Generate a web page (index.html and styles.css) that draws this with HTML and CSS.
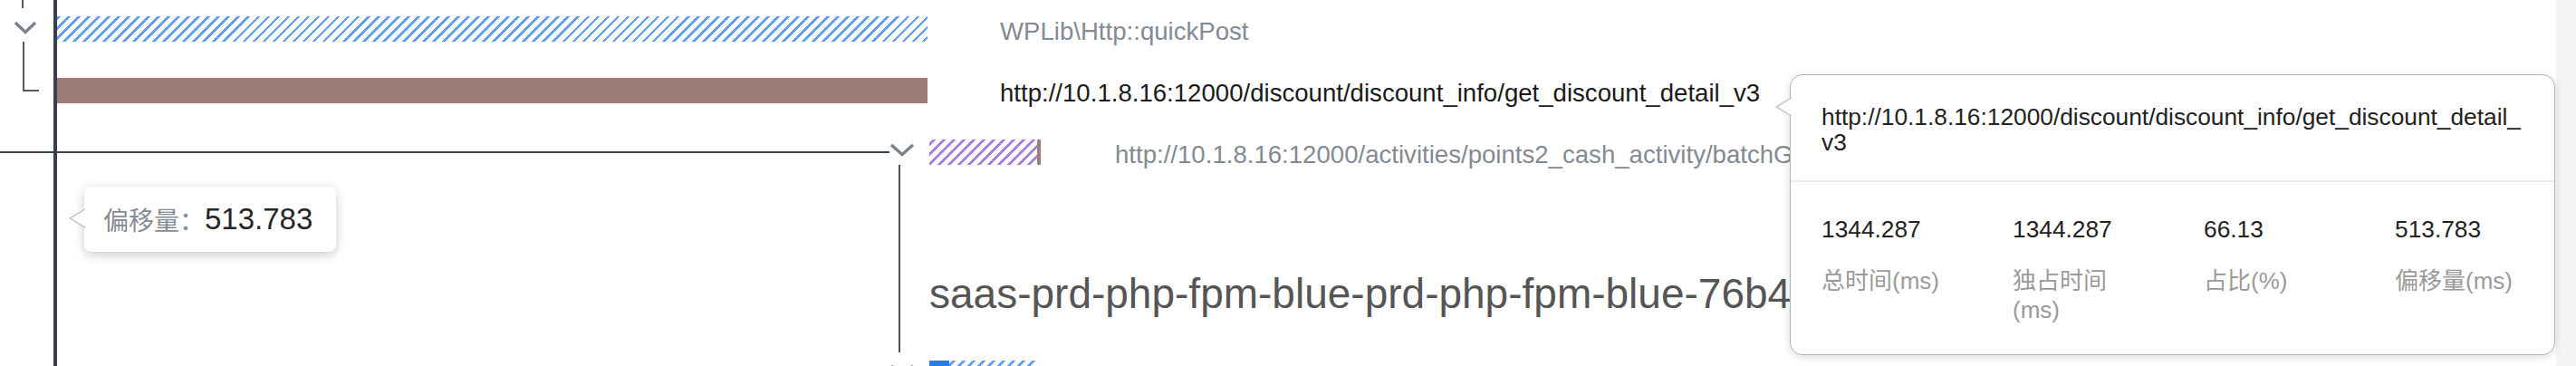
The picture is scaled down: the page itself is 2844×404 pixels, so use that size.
FILE: index.html
```html
<!DOCTYPE html>
<html lang="zh-CN">
<head>
<meta charset="utf-8">
<title>Trace</title>
<link rel="stylesheet" href="styles.css">
</head>
<body>
<div class="screen">
  <main class="chart">
    <div class="row row-a">
      <div class="gutter">
        <span class="stub"></span>
        <svg class="chev chev-root" viewBox="0 0 26 15" width="26" height="15"><polyline points="2,2 13,12.5 24,2" /></svg>
        <span class="drop"></span>
      </div>
      <div class="bar hatch-blue" style="width:964px"></div>
      <span class="label muted">WPLib\Http::quickPost</span>
    </div>
    <div class="row row-b">
      <div class="gutter"><span class="elbow"></span></div>
      <div class="bar solid-brown" style="width:964px"></div>
      <span class="label strong">http://10.1.8.16:12000/discount/discount_info/get_discount_detail_v3</span>
    </div>
    <div class="row row-c">
      <span class="connector"></span>
      <svg class="chev chev-node" viewBox="0 0 28 15" width="28" height="15"><polyline points="2,2 14,12.5 26,2" /></svg>
      <div class="bar hatch-purple" style="width:123px"></div>
      <span class="label muted far">http://10.1.8.16:12000/activities/points2_cash_activity/batchGet</span>
    </div>
    <div class="row row-host">
      <span class="guide"></span>
      <span class="host">saas-prd-php-fpm-blue-prd-php-fpm-blue-76b4k</span>
    </div>
    <div class="row row-e">
      <svg class="chev chev-node" viewBox="0 0 28 15" width="28" height="15"><polyline points="2,2 14,12.5 26,2" /></svg>
      <div class="bar hatch-blue" style="width:117px"><span class="bar-solid" style="width:22px"></span></div>
    </div>
  </main>
  <aside class="strip"></aside>
</div>

<div class="marker"></div>

<div class="tip tip-offset">
  <svg class="tip-arrow" viewBox="0 0 18 22" width="18" height="22"><polygon points="18,1 1,11 18,21" /><polyline points="18,1 1,11 18,21" /></svg>
  <span class="offset-key">偏移量：</span><span class="offset-val">513.783</span>
</div>

<div class="tip tip-detail">
  <svg class="tip-arrow" viewBox="0 0 18 22" width="18" height="22"><polygon points="18,1 1,11 18,21" /><polyline points="18,1 1,11 18,21" /></svg>
  <div class="tip-head">http://10.1.8.16:12000/discount/discount_info/get_discount_detail_v3</div>
  <div class="tip-stats">
    <div class="stat"><div class="stat-val">1344.287</div><div class="stat-key">总时间(ms)</div></div>
    <div class="stat"><div class="stat-val">1344.287</div><div class="stat-key">独占时间(ms)</div></div>
    <div class="stat"><div class="stat-val">66.13</div><div class="stat-key">占比(%)</div></div>
    <div class="stat"><div class="stat-val">513.783</div><div class="stat-key">偏移量(ms)</div></div>
  </div>
</div>
</body>
</html>
```
FILE: styles.css
```css
html, body {
  margin: 0;
  padding: 0;
}
body {
  width: 2844px;
  height: 404px;
  overflow: hidden;
  position: relative;
  background: #ffffff;
  font-family: "Liberation Sans", "Noto Sans CJK SC", sans-serif;
  color: #222;
}
.screen {
  display: flex;
  height: 404px;
}
.chart {
  flex: 1;
  min-width: 0;
  overflow: hidden;
  display: flex;
  flex-direction: column;
}
.strip {
  width: 22px;
  background: #f4f4f5;
}
.row {
  display: flex;
  align-items: flex-start;
  height: 68px;
  flex: none;
  white-space: nowrap;
}
.gutter {
  width: 60px;
  height: 100%;
  flex: none;
  display: flex;
  flex-direction: column;
  align-items: flex-start;
}
.stub {
  margin-left: 24px;
  width: 2px;
  height: 9px;
  background: #555b64;
}
.chev {
  flex: none;
  fill: none;
  stroke: #7a828c;
  stroke-width: 3.4;
  stroke-linecap: butt;
  stroke-linejoin: miter;
}
.chev-root {
  margin-top: 14px;
  margin-left: 15px;
}
.drop {
  margin-top: 8px;
  margin-left: 25px;
  width: 2px;
  flex: 1;
  background: #555b64;
}
.elbow {
  margin-left: 25px;
  width: 16px;
  height: 31px;
  border-left: 2px solid #555b64;
  border-bottom: 2px solid #555b64;
}
.bar {
  flex: none;
  height: 28px;
  margin-top: 18px;
  display: flex;
}
.hatch-blue {
  background: repeating-linear-gradient(135deg, #ffffff 0 2.4px, #62a0f5 2.4px 5px, #ffffff 5px 7.8px);
}
.hatch-purple {
  background: repeating-linear-gradient(135deg, #ffffff 0 2.4px, #a97fe6 2.4px 5px, #ffffff 5px 7.8px);
  box-sizing: border-box;
  border-right: 4px solid #9d7c7a;
}
.solid-brown {
  background: #9d7b79;
}
.bar-solid {
  height: 100%;
  background: #2a7be6;
}
.label {
  font-size: 27.6px;
  line-height: 30px;
  margin-top: 20px;
  margin-left: 80px;
}
.label.far {
  margin-left: 82px;
}
.muted {
  color: #848a93;
}
.strong {
  color: #1a1a1a;
}
.connector {
  flex: none;
  width: 982px;
  height: 2px;
  margin-top: 31px;
  background: #3a404c;
}
.chev-node {
  margin-top: 22px;
}
.row-c .bar {
  margin-left: 16px;
}
.row-host {
  height: 176px;
}
.guide {
  flex: none;
  width: 2px;
  height: 207px;
  margin-top: -22px;
  margin-left: 992px;
  background: #4b515b;
}
.host {
  margin-left: 32px;
  margin-top: 94px;
  font-size: 46px;
  line-height: 52px;
  color: #555555;
}
.row-e .chev-node {
  margin-left: 982px;
}
.row-e .bar {
  margin-left: 16px;
}
.marker {
  position: absolute;
  left: 59px;
  top: 0;
  width: 4px;
  height: 404px;
  background: #3a3f4c;
}
.tip {
  position: absolute;
  background: #ffffff;
  box-sizing: border-box;
}
.tip-arrow {
  position: absolute;
  left: -17px;
}
.tip-arrow polygon {
  fill: #ffffff;
  stroke: none;
}
.tip-arrow polyline {
  fill: none;
  stroke: #c4c6ca;
  stroke-width: 1.5;
}
.tip-offset {
  left: 93px;
  top: 206px;
  width: 278px;
  height: 72px;
  padding-left: 21px;
  display: flex;
  align-items: center;
  border-radius: 8px;
  box-shadow: 0 3px 12px rgba(0, 0, 0, 0.22);
  white-space: nowrap;
}
.tip-offset .tip-arrow {
  top: 24px;
}
.offset-key {
  font-size: 28px;
  color: #878c94;
}
.offset-val {
  font-size: 33px;
  color: #262626;
}
.tip-detail {
  left: 1976px;
  top: 82px;
  width: 845px;
  height: 310px;
  border: 1.5px solid #b4b4b4;
  border-radius: 14px;
  box-shadow: 0 2px 10px rgba(0, 0, 0, 0.14);
}
.tip-detail .tip-arrow {
  top: 24px;
}
.tip-head {
  padding: 32px 34px 28px;
  font-size: 26.3px;
  line-height: 28px;
  color: #222;
  word-break: break-all;
  border-bottom: 2px solid #ececec;
}
.tip-stats {
  display: grid;
  grid-template-columns: repeat(4, 144px);
  column-gap: 67px;
  padding: 37px 34px 0;
}
.stat-val {
  font-size: 26.3px;
  line-height: 30px;
  color: #222;
}
.stat-key {
  margin-top: 26px;
  font-size: 26px;
  line-height: 32px;
  color: #9a9a9a;
}
```
